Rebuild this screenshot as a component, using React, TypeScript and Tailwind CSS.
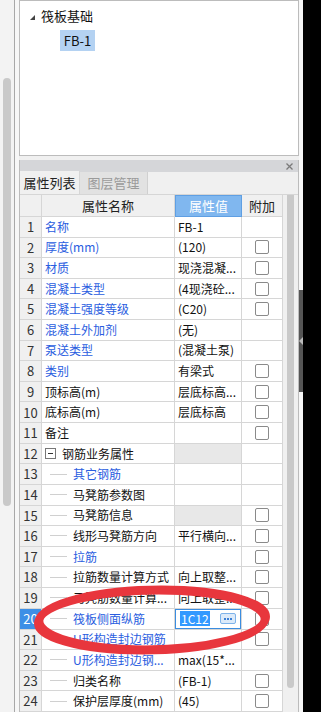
import React from 'react'

type Row = {
  n: number
  name: string
  blue?: boolean
  val?: string
  cb?: boolean
  tree?: boolean
  group?: boolean
  grayVal?: boolean
  editing?: boolean
}

const rows: Row[] = [
  { n: 1, name: '名称', blue: true, val: 'FB-1' },
  { n: 2, name: '厚度(mm)', blue: true, val: '(120)', cb: true },
  { n: 3, name: '材质', blue: true, val: '现浇混凝...', cb: true },
  { n: 4, name: '混凝土类型', blue: true, val: '(4现浇砼...', cb: true },
  { n: 5, name: '混凝土强度等级', blue: true, val: '(C20)', cb: true },
  { n: 6, name: '混凝土外加剂', blue: true, val: '(无)' },
  { n: 7, name: '泵送类型', blue: true, val: '(混凝土泵)' },
  { n: 8, name: '类别', blue: true, val: '有梁式', cb: true },
  { n: 9, name: '顶标高(m)', val: '层底标高...', cb: true },
  { n: 10, name: '底标高(m)', val: '层底标高', cb: true },
  { n: 11, name: '备注', cb: true },
  { n: 12, name: '钢筋业务属性', group: true, grayVal: true },
  { n: 13, name: '其它钢筋', blue: true, tree: true },
  { n: 14, name: '马凳筋参数图', tree: true },
  { n: 15, name: '马凳筋信息', tree: true, grayVal: true, cb: true },
  { n: 16, name: '线形马凳筋方向', tree: true, val: '平行横向...', cb: true },
  { n: 17, name: '拉筋', blue: true, tree: true, cb: true },
  { n: 18, name: '拉筋数量计算方式', tree: true, val: '向上取整...', cb: true },
  { n: 19, name: '马凳筋数量计算...', tree: true, val: '向上取整...', cb: true },
  { n: 20, name: '筏板侧面纵筋', blue: true, tree: true, editing: true, cb: true },
  { n: 21, name: 'U形构造封边钢筋', blue: true, tree: true, cb: true },
  { n: 22, name: 'U形构造封边钢...', blue: true, tree: true, val: 'max(15*...' },
  { n: 23, name: '归类名称', tree: true, val: '(FB-1)', cb: true },
  { n: 24, name: '保护层厚度(mm)', tree: true, val: '(45)', cb: true },
]

function CheckBox() {
  return <div className="w-[14px] h-[14px] border border-[#8a8a8a] rounded-[2px] bg-white" />
}

function PropRow({ row }: { row: Row }) {
  const sel = row.editing
  return (
    <div className="flex h-[21px]">
      <div
        className={`w-[22px] shrink-0 flex items-center justify-center border-r border-b border-[#d6d6d6] text-[13px] ${
          sel ? 'bg-[#3d8fe6] text-white' : 'bg-[#f0f0f0] text-[#333]'
        }`}
      >
        {row.n}
      </div>
      <div
        className={`w-[133px] shrink-0 flex items-center border-r border-b border-[#d6d6d6] bg-white whitespace-nowrap overflow-hidden ${
          row.blue ? 'text-[#2a5de0]' : 'text-[#111]'
        }`}
      >
        {row.group ? (
          <div className="flex items-center pl-[3px] gap-[6px]">
            <div className="w-[11px] h-[11px] border border-[#777] flex items-center justify-center">
              <div className="w-[5px] h-px bg-[#333]" />
            </div>
            <span>{row.name}</span>
          </div>
        ) : row.tree ? (
          <div className="flex items-center pl-[8px] gap-[6px]">
            <div className="w-[17px] h-px bg-[#d0d0d0]" />
            <span>{row.name}</span>
          </div>
        ) : (
          <span className="pl-[3px]">{row.name}</span>
        )}
      </div>
      <div
        className={`w-[67px] shrink-0 flex items-center border-r border-b border-[#d6d6d6] whitespace-nowrap overflow-hidden text-[#111] ${
          row.grayVal ? 'bg-[#e8e8e8]' : 'bg-white'
        }`}
      >
        {row.editing ? (
          <div className="flex items-center w-full h-[20px] border border-[#3b8de0] bg-white pl-[4px] pr-[4px]">
            <span className="bg-[#3399ff] text-white leading-[15px] px-px">1C12</span>
            <div className="ml-auto w-[16px] h-[11px] border border-[#7eb3ea] bg-[#dceaf9] rounded-[2px] flex items-center justify-center gap-px">
              <div className="w-[2px] h-[2px] bg-[#3b7fd6]" />
              <div className="w-[2px] h-[2px] bg-[#3b7fd6]" />
              <div className="w-[2px] h-[2px] bg-[#3b7fd6]" />
            </div>
          </div>
        ) : (
          <span className="pl-[3px]">{row.val}</span>
        )}
      </div>
      <div className="w-[41px] shrink-0 flex items-center justify-center border-r border-b border-[#d6d6d6] bg-white">
        {row.cb && <CheckBox />}
      </div>
    </div>
  )
}

export default function App() {
  return (
    <div className="relative w-[321px] h-[712px] overflow-hidden flex bg-black font-['Microsoft_YaHei','Noto_Sans_CJK_SC',sans-serif] text-[12px]">
      {/* left scroll strip */}
      <div className="w-[14px] shrink-0 bg-[#f3f3f3] pt-[78px] px-[3px]">
        <div className="h-[428px] rounded-full bg-[#c9c9c9]" />
      </div>
      <div className="w-px shrink-0 bg-[#a8a8a8]" />
      <div className="w-[4px] shrink-0 bg-[#f7f7f7]" />

      {/* main column */}
      <div className="w-[280px] shrink-0 flex flex-col bg-[#f0f0f0]">
        {/* tree panel */}
        <div className="h-[156px] shrink-0 border border-[#bcbcbc] bg-white pt-[6px] pl-[10px]">
          <div className="flex items-center gap-[6px] h-[18px]">
            <svg width="5" height="5" viewBox="0 0 5 5" className="mt-[2px]">
              <polygon points="5,0 5,5 0,5" fill="#444" />
            </svg>
            <span className="text-[13px] text-[#111]">筏板基础</span>
          </div>
          <div className="ml-[30px] mt-[5px] w-[35px] h-[21px] bg-[#b4d2f2] flex items-center justify-center text-[13px] text-[#111]">
            FB-1
          </div>
        </div>
        <div className="h-[4px] shrink-0" />

        {/* properties panel */}
        <div className="flex-1 border-x border-[#bcbcbc] flex flex-col overflow-hidden bg-white">
          <div className="h-[12px] shrink-0 bg-[#d5d6d9] flex items-center justify-end pr-[5px]">
            <svg width="7" height="7" viewBox="0 0 7 7">
              <path d="M0.5 0.5 L6.5 6.5 M6.5 0.5 L0.5 6.5" stroke="#7a7a7a" strokeWidth="1.3" />
            </svg>
          </div>
          <div className="h-[23px] shrink-0 bg-[#f0f0f0] flex items-end border-b border-[#d6d6d6]">
            <div className="w-[60px] h-[23px] flex items-center justify-center text-[13px] text-[#222] bg-[#f0f0f0] border-r border-[#d6d6d6]">
              属性列表
            </div>
            <div className="w-[68px] h-[22px] flex items-center justify-center text-[13px] text-[#9a9a9a] bg-[#e2e2e2] border-r border-[#d0d0d0]">
              图层管理
            </div>
          </div>

          <div className="flex flex-1 overflow-hidden">
            <div className="w-[263px] shrink-0 flex flex-col">
              <div className="flex h-[22px] shrink-0 text-[13px]">
                <div className="w-[22px] shrink-0 bg-[#f0f0f0] border-r border-b border-[#d6d6d6]" />
                <div className="w-[133px] shrink-0 bg-[#f0f0f0] border-r border-b border-[#d6d6d6] flex items-center justify-center text-[#222]">
                  属性名称
                </div>
                <div className="w-[67px] shrink-0 bg-[#80b7ef] border border-[#5f9fe3] flex items-center justify-center text-white">
                  属性值
                </div>
                <div className="w-[41px] shrink-0 bg-[#f0f0f0] border-r border-b border-[#d6d6d6] flex items-center justify-center text-[#222]">
                  附加
                </div>
              </div>
              {rows.map((r) => (
                <PropRow key={r.n} row={r} />
              ))}
            </div>
            <div className="w-[15px] shrink-0 bg-[#f0f0f0] px-[4px]">
              <div className="mt-[-7px] h-[500px] rounded-full bg-[#c9c9c9] w-[7px]" />
            </div>
          </div>
        </div>
      </div>

      {/* right collapse strip */}
      <div className="w-[4px] shrink-0 bg-[#f7f7f7] flex flex-col">
        <div className="h-[290px]" />
        <div className="h-[102px] bg-[#555] flex items-center justify-center">
          <svg width="4" height="8" viewBox="0 0 4 8">
            <polygon points="4,0 4,8 0,4" fill="#bbb" />
          </svg>
        </div>
      </div>
      <div className="w-[18px] shrink-0 bg-black" />

      {/* red annotation */}
      <svg className="absolute left-0 top-0 pointer-events-none" width="321" height="712" viewBox="0 0 321 712">
        <g transform="translate(152 620) skewX(-15)">
          <ellipse cx="0" cy="0" rx="113" ry="30" fill="none" stroke="#e8363d" strokeWidth="9" />
        </g>
      </svg>
    </div>
  )
}
